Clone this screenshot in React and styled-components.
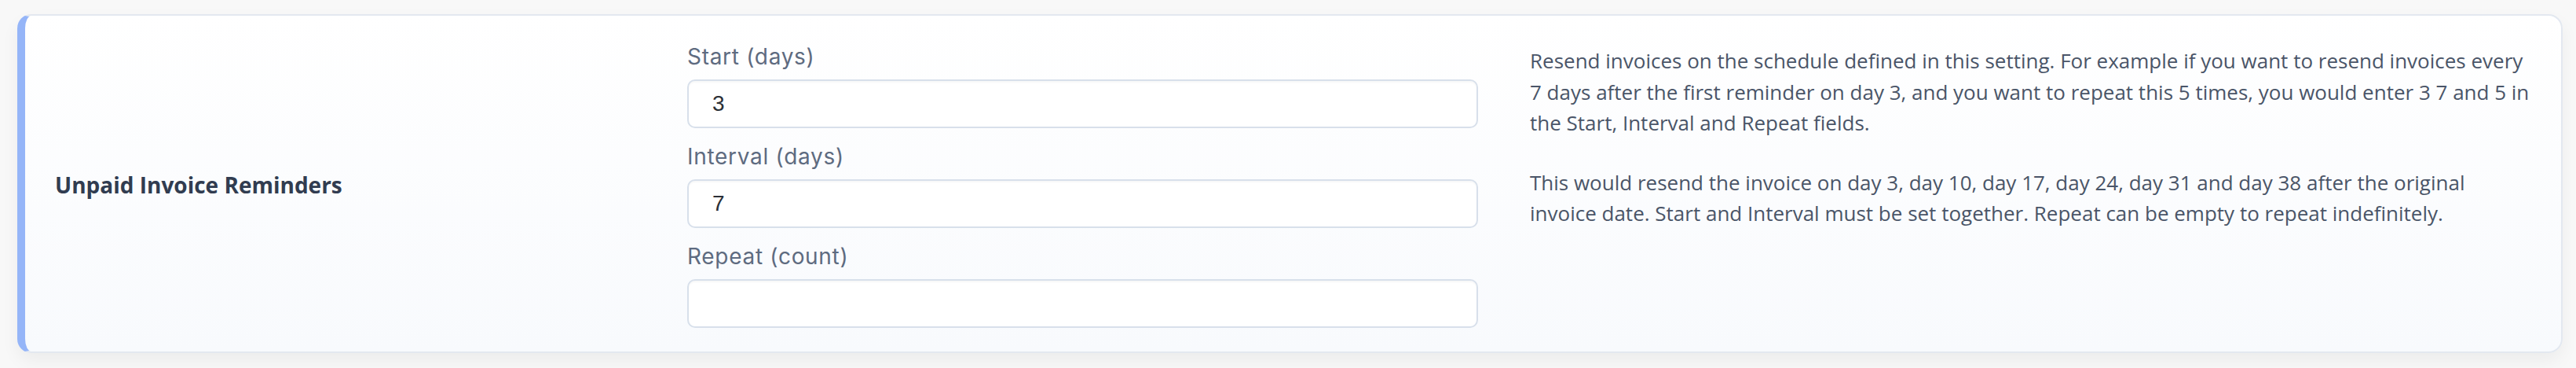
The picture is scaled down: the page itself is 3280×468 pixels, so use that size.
import React from 'react';
import styled, { createGlobalStyle } from 'styled-components';

const GlobalStyle = createGlobalStyle`
  html, body {
    margin: 0;
    padding: 0;
    background: #f8f8f8;
  }
  body {
    font-family: 'Open Sans', 'Liberation Sans', sans-serif;
  }
`;

const fields = [
  { id: 'start', label: 'Start (days)', value: '3' },
  { id: 'interval', label: 'Interval (days)', value: '7' },
  { id: 'repeat', label: 'Repeat (count)', value: '' }
];

const App = () => (
  <>
    <GlobalStyle />
    <Page>
      <SettingCard>
        <SettingTitle>Unpaid Invoice Reminders</SettingTitle>
        <FieldStack>
          {fields.map(field => (
            <FieldGroup key={field.id}>
              <FieldLabel htmlFor={field.id}>{field.label}</FieldLabel>
              <FieldInput id={field.id} type="text" defaultValue={field.value} />
            </FieldGroup>
          ))}
        </FieldStack>
        <HelpText>
          <p>
            Resend invoices on the schedule defined in this setting. For example if you want to
            resend invoices every 7 days after the first reminder on day 3, and you want to repeat
            this 5 times, you would enter 3 7 and 5 in the Start, Interval and Repeat fields.
          </p>
          <p>
            This would resend the invoice on day 3, day 10, day 17, day 24, day 31 and day 38 after
            the original invoice date. Start and Interval must be set together. Repeat can be empty
            to repeat indefinitely.
          </p>
        </HelpText>
      </SettingCard>
    </Page>
  </>
);

const Page = styled.div`
  padding: 18px 17px 19px 22px;
`;

const SettingCard = styled.section`
  display: grid;
  grid-template-columns: 805px 1007px 1fr;
  align-items: start;
  padding: 32px 40px 30px 38px;
  border: 2px solid #e3e8f0;
  border-left: 10px solid #95b5f8;
  border-radius: 18px;
  background: linear-gradient(to bottom, #ffffff, #f8fafd);
  box-shadow: 0 10px 22px rgba(0, 0, 0, 0.05);
`;

const SettingTitle = styled.h3`
  align-self: center;
  margin: 0;
  font-family: 'Open Sans', sans-serif;
  font-size: 28px;
  font-weight: 700;
  line-height: 40px;
  color: #313c50;
`;

const FieldStack = styled.div`
  display: flex;
  flex-direction: column;
  gap: 16px;
`;

const FieldGroup = styled.div`
  display: flex;
  flex-direction: column;
  gap: 9px;
`;

const FieldLabel = styled.label`
  font-family: 'Inter', 'Lato', sans-serif;
  font-size: 28px;
  font-weight: 400;
  letter-spacing: 0.7px;
  line-height: 40px;
  color: #5e6b80;
`;

const FieldInput = styled.input`
  box-sizing: border-box;
  width: 100%;
  height: 62px;
  padding: 0 30px;
  border: 2px solid #d8e0eb;
  border-radius: 10px;
  background: #ffffff;
  box-shadow: inset 0 2px 2px rgba(15, 23, 42, 0.03);
  font-family: 'Liberation Sans', Arial, sans-serif;
  font-size: 28px;
  color: #2b2f36;
  outline: none;
`;

const HelpText = styled.div`
  margin-left: 66px;
  padding-top: 6px;
  font-family: 'Open Sans', sans-serif;
  font-size: 26px;
  line-height: 39.5px;
  color: #4a5568;

  p {
    margin: 0 0 36px;
  }
`;

export default App;
